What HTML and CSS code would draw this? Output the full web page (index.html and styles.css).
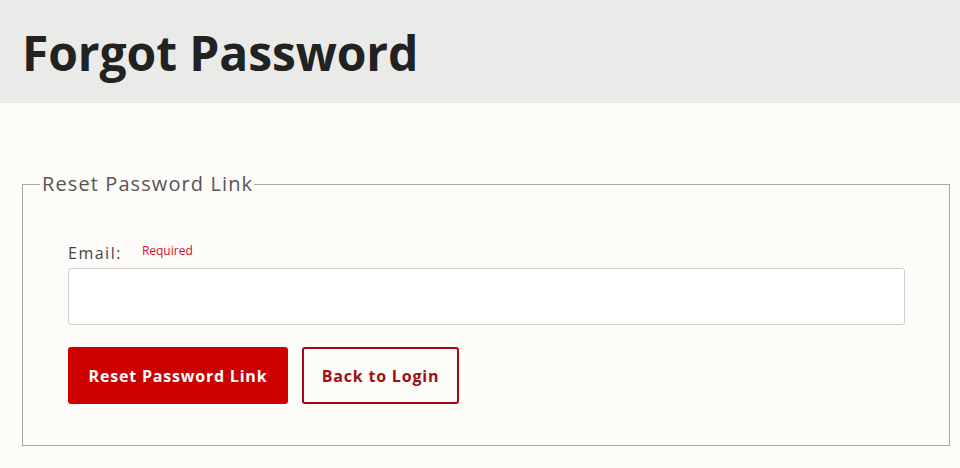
FILE: index.html
```html
<!DOCTYPE html>
<html lang="en">
<head>
<meta charset="utf-8">
<title>Forgot Password</title>
<link rel="stylesheet" href="styles.css">
</head>
<body>
<header class="page-header">
  <h1 class="page-title">Forgot Password</h1>
</header>
<main class="page-main">
  <form class="reset-form" onsubmit="return false">
    <fieldset class="reset-fieldset">
      <legend class="reset-legend">Reset Password Link</legend>
      <div class="field-label-row">
        <label class="field-label" for="email">Email:</label>
        <span class="field-required">Required</span>
      </div>
      <input class="field-input" id="email" type="email">
      <div class="button-row">
        <button class="btn btn-primary" type="submit">Reset Password Link</button>
        <button class="btn btn-secondary" type="button">Back to Login</button>
      </div>
    </fieldset>
  </form>
</main>
</body>
</html>
```
FILE: styles.css
```css
html, body {
  margin: 0;
  padding: 0;
}
body {
  background: #fdfcf8;
  font-family: "Open Sans", "Liberation Sans", Arial, sans-serif;
  color: #333;
}
.page-header {
  background: #eaeae8;
  height: 103px;
  box-sizing: border-box;
  padding: 0 22px;
  display: flex;
  align-items: center;
}
.page-title {
  margin: 0;
  font-size: 48px;
  font-weight: 700;
  color: #222;
  letter-spacing: -0.1px;
  line-height: 1;
  padding-top: 2px;
}
.page-main {
  padding: 70px 10px 0 22px;
}
.reset-form {
  margin: 0;
}
.reset-fieldset {
  margin: 0;
  border: 1px solid #a8a8a8;
  padding: 46px 44px 41px 45px;
}
.reset-legend {
  font-size: 20px;
  line-height: 22px;
  color: #555;
  letter-spacing: 1.1px;
  padding: 0 1px 0 2px;
  margin-left: -28px;
}
.field-label-row {
  display: flex;
  align-items: flex-start;
  height: 24px;
  margin-bottom: 3px;
}
.field-label {
  font-size: 16px;
  line-height: 24px;
  letter-spacing: 1.5px;
  color: #444;
}
.field-required {
  margin-left: 20px;
  margin-top: 1px;
  font-size: 12px;
  line-height: 18px;
  color: #d0102a;
}
.field-input {
  display: block;
  width: 100%;
  box-sizing: border-box;
  height: 57px;
  border: 1px solid #cfcfcf;
  border-radius: 3px;
  background: #fff;
  margin: 0;
}
.button-row {
  display: flex;
  gap: 14px;
  margin-top: 22px;
}
.btn {
  height: 57px;
  box-sizing: border-box;
  padding: 0;
  font-family: inherit;
  font-size: 16px;
  font-weight: 700;
  letter-spacing: 0.8px;
  border-radius: 3px;
  cursor: pointer;
}
.btn-primary {
  background: #cc0000;
  color: #fff;
  border: none;
  width: 220px;
}
.btn-secondary {
  background: #fdfcf8;
  color: #a00e12;
  border: 2px solid #a5080c;
  width: 157px;
}
```
